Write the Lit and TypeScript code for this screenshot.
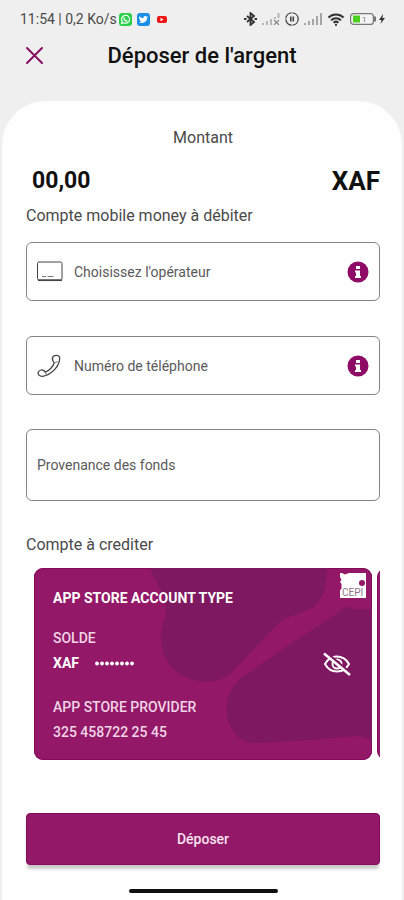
import { LitElement, html, css, svg } from "lit";
import { customElement, state } from "lit/decorators.js";

const reset = css`
  *,
  *::before {
    box-sizing: border-box;
  }
  svg {
    display: block;
    flex: none;
  }
`;

@customElement("status-bar")
class StatusBar extends LitElement {
  static styles = [
    reset,
    css`
      :host {
        display: flex;
        align-items: center;
        justify-content: space-between;
        height: 38px;
        padding: 0 18px 0 20px;
        color: #4a4a4a;
        font-size: 14px;
        line-height: 16px;
      }
      .side {
        display: flex;
        align-items: center;
        gap: 5px;
      }
      .left {
        gap: 2px;
      }
      .apps {
        display: flex;
        align-items: center;
        gap: 5px;
      }
    `,
  ];

  private bars(faint: boolean) {
    return svg`
      <g fill=${faint ? "#b4b4b4" : "#a6a6a6"}>
        <rect x="0" y="10" width="2" height="2" />
        <rect x="4" y="8" width="2" height="4" />
        <rect x="8" y="6" width="2" height="6" />
        ${faint
          ? svg`<path d="M12 7l5 5M17 7l-5 5" stroke="#8a8a8a" stroke-width="1.200" /><path d="M12 4h2v2h-2zM15.500 0h2v5h-2z" />`
          : svg`<rect x="12" y="3" width="2" height="9" /><rect x="16" y="0" width="2" height="12" />`}
      </g>`;
  }

  render() {
    return html`
      <div class="side left">
        <span>11:54 | 0,2 Ko/s</span>
        <div class="apps">
          <svg width="13" height="13" viewBox="0 0 13 13">
            <rect width="13" height="13" rx="3" fill="#2bd04a" />
            <path d="M2.6 10.4l.6-2a4 4 0 1 1 1.5 1.4z" fill="none" stroke="#fff" stroke-width="1.100" />
            <path d="M5 4.600c0 2 1.500 3.500 3.400 3.500" fill="none" stroke="#fff" stroke-width="1.300" />
          </svg>
          <svg width="13" height="13" viewBox="0 0 13 13">
            <rect width="13" height="13" rx="3" fill="#1b8fe8" />
            <path
              d="M2.300 3.200c1.100 1.200 2.500 1.900 4.100 2C6.200 3.400 8.400 2.400 9.700 3.700l1.300-.4-.8 1.300C10.300 8.800 5.900 11.300 2 9.400c1 0 1.800-.2 2.500-.8-.9-.1-1.500-.6-1.700-1.300h.8C2.700 6.900 2.200 6.200 2.200 5.400l.7.2C2.100 5 1.900 4 2.300 3.200z"
              fill="#fff"
            />
          </svg>
          <svg width="13" height="13" viewBox="0 0 13 13">
            <rect x="2" y="3" width="10" height="7" rx="2" fill="#f01414" />
            <path d="M5.500 4.800v3.400l3-1.700z" fill="#fff" />
          </svg>
        </div>
      </div>
      <div class="side">
        <svg width="13" height="14" viewBox="0 0 13 14" fill="none" stroke="#333" stroke-width="1.800">
          <path d="M3 4l7 6-3.500 3V1L10 4l-7 6" />
          <path d="M0 7h2.500M10.500 7H13" stroke-width="2.200" />
        </svg>
        <svg width="18" height="12" viewBox="0 0 18 12">${this.bars(true)}</svg>
        <svg width="14" height="14" viewBox="0 0 14 14" fill="none" stroke="#444" stroke-width="1.300">
          <circle cx="7" cy="7" r="6.200" stroke-dasharray="8.800 .94" />
          <path d="M5.800 4.500v5M8.300 4.500v5" stroke-width="1.600" />
        </svg>
        <svg width="18" height="12" viewBox="0 0 18 12">${this.bars(false)}</svg>
        <svg width="18" height="13" viewBox="0 0 16 12" fill="none" stroke="#333" stroke-width="1.900">
          <path d="M1 4.200a10 10 0 0 1 14 0M3.400 6.800a6.500 6.500 0 0 1 9.200 0M5.800 9a3.200 3.200 0 0 1 4.400 0" />
          <circle cx="8" cy="11" r="1" fill="#333" stroke="none" />
        </svg>
        <svg width="36" height="12" viewBox="0 0 36 12">
          <rect x="0.600" y="0.600" width="22.800" height="10.800" rx="3" fill="#f4f4f4" stroke="#777" stroke-width="1.200" />
          <rect x="3" y="2.500" width="7" height="7" fill="#4bd01d" />
          <path d="M25 3.500v5" stroke="#777" stroke-width="2" />
          <text x="12" y="9" font-size="8" fill="#777">1</text>
          <path d="M33 1l-4 6h2.500L30.500 11l4.500-6h-2.500z" fill="#333" />
        </svg>
      </div>
    `;
  }
}

@customElement("account-card")
class AccountCard extends LitElement {
  static styles = [
    reset,
    css`
      :host {
        display: block;
        position: relative;
        overflow: hidden;
        height: 192px;
        padding: 20px 19px;
        border-radius: 9px;
        background: #931868;
        color: #fff;
        box-shadow: inset 0 0 0 1px #850a5a;
        font-size: 14px;
        line-height: 20px;
      }
      .pattern {
        position: absolute;
        inset: 0;
        width: 100%;
        height: 100%;
      }
      .info {
        position: relative;
        display: flex;
        flex-direction: column;
      }
      .title {
        font-weight: 700;
        margin-bottom: 20px;
      }
      .soft {
        color: #f0d5e6;
        font-weight: 500;
      }
      .balance {
        display: flex;
        align-items: center;
        gap: 16px;
        height: 30px;
        font-weight: 700;
        margin-bottom: 19px;
      }
      .number {
        margin-top: 5px;
      }
      .logo {
        position: absolute;
        top: 5px;
        right: 6px;
        width: 26px;
        height: 25px;
      }
      .eye {
        position: absolute;
        top: 84px;
        right: 20px;
        padding: 0;
        border: 0;
        background: none;
        color: #fff;
      }
    `,
  ];

  render() {
    return html`
      <svg class="pattern" viewBox="0 0 338 192" preserveAspectRatio="xMaxYMin slice" fill="#7e1861" aria-hidden="true">
        <path
          d="M116 0C124 20 134 30 132 48C122 68 127 92 143 104C158 116 184 118 198 104L240 60C252 46 270 46 281 38C292 27 293 12 293 0z"
        />
        <path
          d="M338 41H318L313 38L296 50L256 76L210 108C196 118 190 134 193 148C198 168 208 176 224 175L276 172L321 168Q332 168 338 174z"
        />
      </svg>
      <div class="info">
        <span class="title">APP STORE ACCOUNT TYPE</span>
        <span class="soft">SOLDE</span>
        <div class="balance">
          <span>XAF</span>
          <svg width="39" height="5" viewBox="0 0 39 5" fill="#fff" role="img" aria-label="Solde masqué">
            ${[0, 1, 2, 3, 4, 5, 6, 7].map((i) => svg`<circle cx=${2 + i * 5} cy="2.500" r="1.900" />`)}
          </svg>
        </div>
        <span class="soft">APP STORE PROVIDER</span>
        <span class="soft number">325 458722 25 45</span>
      </div>
      <svg class="logo" viewBox="0 0 26 25">
        <path d="M0 0h26v25H0v-8l1.500-1V11L0 9l1.500-2L0 4z" fill="#fff" />
        <path d="M2 0l3 1.500L9 0z" fill="#931868" />
        <circle cx="22" cy="10" r="3" fill="#931868" />
        <text x="2" y="23" font-size="10" fill="#8d7487">CEPI</text>
      </svg>
      <button class="eye" aria-label="Afficher le solde">
        <svg width="30" height="24" viewBox="0 0 30 24" fill="none" stroke="#fff" stroke-width="2">
          <path d="M3 12C6 6.500 10 4.500 14.500 4.500S24 6.500 27 12c-3 5.500-7.500 7.500-12 7.500S6 17.500 3 12z" />
          <circle cx="15" cy="12" r="4.500" />
          <path d="M4 .5L29 22" stroke="#7e1861" stroke-width="3" />
          <path d="M2 1.500L28 23" stroke-width="2.500" />
        </svg>
      </button>
    `;
  }
}

@customElement("app-root")
class AppRoot extends LitElement {
  @state() private operator = "";

  static styles = [
    reset,
    css`
      :host {
        display: flex;
        flex-direction: column;
        min-height: 100vh;
        background: #efefef;
        color: #111;
        font-family: Roboto, "Liberation Sans", sans-serif;
      }
      button,
      input,
      select {
        font: inherit;
        color: inherit;
      }
      .header {
        display: grid;
        grid-template-columns: 20px 1fr 20px;
        align-items: center;
        height: 36px;
        padding: 0 24px;
      }
      .close {
        padding: 0;
        border: 0;
        background: none;
      }
      h1 {
        margin: 0;
        font-size: 22px;
        line-height: 28px;
        font-weight: 500;
        text-align: center;
      }
      .sheet {
        flex: 1;
        display: flex;
        flex-direction: column;
        margin: 27px 2px 0;
        padding: 25px 22px 7px 24px;
        border-radius: 44px 44px 0 0;
        background: #fefefe;
      }
      .label {
        font-size: 16px;
        line-height: 24px;
        color: #4a4a4a;
      }
      .center {
        text-align: center;
      }
      .amount {
        display: flex;
        align-items: center;
        justify-content: space-between;
        height: 40px;
        margin: 11px 0 3px;
        padding-left: 6px;
        font-weight: 700;
      }
      .amount input {
        width: 160px;
        padding: 0;
        border: 0;
        background: none;
        font-size: 23px;
        line-height: 28px;
      }
      .currency {
        font-size: 26px;
        line-height: 32px;
      }
      .field {
        display: flex;
        align-items: center;
        gap: 11px;
        height: 59px;
        margin-bottom: 35px;
        padding: 0 10px;
        border: 1px solid #858585;
        border-radius: 6px;
        color: #5a5a5a;
        font-size: 14px;
        line-height: 20px;
      }
      .field.first {
        margin-top: 14px;
      }
      .field.tall {
        height: 72px;
        margin-top: -1px;
        margin-bottom: 32px;
      }
      .field input,
      .field select {
        appearance: none;
        flex: 1;
        min-width: 0;
        padding: 0;
        border: 0;
        outline: 0;
        background: none;
      }
      .field input::placeholder {
        color: #5a5a5a;
        opacity: 1;
      }
      .info {
        padding: 0;
        border: 0;
        background: none;
      }
      .cards {
        display: flex;
        gap: 5px;
        margin-top: 11px;
        padding-left: 8px;
        overflow: hidden;
      }
      .cards account-card {
        flex: none;
        width: calc(100% - 8px);
      }
      .next {
        flex: none;
        width: 100%;
        border: 1px solid #850a5a;
        border-radius: 9px;
        background: #931868;
      }
      .submit {
        height: 52px;
        margin-top: 53px;
        border: 1px solid #850a5a;
        border-radius: 4px;
        background: #931868;
        box-shadow: 0 5px 3px -1px #c9ccc9;
        color: #f6e2ef;
        font-size: 14px;
        font-weight: 500;
      }
      .home {
        align-self: center;
        width: 149px;
        height: 4px;
        margin-top: auto;
        border-radius: 2px;
        background: #111;
      }
    `,
  ];

  private infoButton(label: string) {
    return html`
      <button class="info" type="button" aria-label=${label}>
        <svg width="22" height="22" viewBox="0 0 22 22">
          <circle cx="11" cy="11" r="10.500" fill="#8f0c66" />
          <path d="M9 5h4v3H9zM8 9.500h5V15h1v2H8v-2h1v-3.500H8z" fill="#fff" />
        </svg>
      </button>
    `;
  }

  render() {
    return html`
      <status-bar></status-bar>
      <header class="header">
        <button class="close" type="button" aria-label="Fermer">
          <svg width="20" height="20" viewBox="0 0 20 20" stroke="#851062" stroke-width="2" stroke-linecap="round">
            <path d="M3 2l15 15M18 2L3 17" />
          </svg>
        </button>
        <h1>Déposer de l'argent</h1>
      </header>
      <main class="sheet">
        <label class="label center" for="amount">Montant</label>
        <div class="amount">
          <input id="amount" inputmode="decimal" value="00,00" />
          <span class="currency">XAF</span>
        </div>
        <label class="label" for="operator">Compte mobile money à débiter</label>
        <div class="field first">
          <svg width="26" height="21" viewBox="0 0 26 21" fill="none" stroke="#444">
            <rect x="0.500" y="1" width="24.500" height="18" rx="1.500" />
            <path d="M1 19.300h24" stroke-width="1.500" />
            <path d="M5 15.500h4M10.500 15.500h6" stroke="#777" />
          </svg>
          <select
            id="operator"
            .value=${this.operator}
            @change=${(e: Event) => (this.operator = (e.target as HTMLSelectElement).value)}
          >
            <option value="">Choisissez l'opérateur</option>
          </select>
          ${this.infoButton("Aide sur l'opérateur")}
        </div>
        <div class="field">
          <svg width="26" height="24" viewBox="0 0 26 24" fill="none" stroke="#444" stroke-width="1.300" stroke-linejoin="round">
            <path
              d="M16.500 2.200C18.500 .8 21.500 1 22.600 3C23.500 11 15 21 5.500 22.300C3 22.500 1.300 20.800 1 18.500C2.200 16.300 4.800 15.500 6.600 16.300L8.300 18.200C12 16.800 16 12.800 17.200 9L15.700 6.200C15.200 4.800 15.500 3 16.500 2.200z"
            />
            <path d="M17.200 9l3.500-1.500M8.300 18.200l1 2.600" stroke="#888" />
          </svg>
          <input type="tel" aria-label="Numéro de téléphone" placeholder="Numéro de téléphone" />
          ${this.infoButton("Aide sur le numéro")}
        </div>
        <div class="field tall">
          <input aria-label="Provenance des fonds" placeholder="Provenance des fonds" />
        </div>
        <span class="label">Compte à crediter</span>
        <div class="cards">
          <account-card></account-card>
          <div class="next"></div>
        </div>
        <button class="submit" type="button">Déposer</button>
        <div class="home"></div>
      </main>
    `;
  }
}
